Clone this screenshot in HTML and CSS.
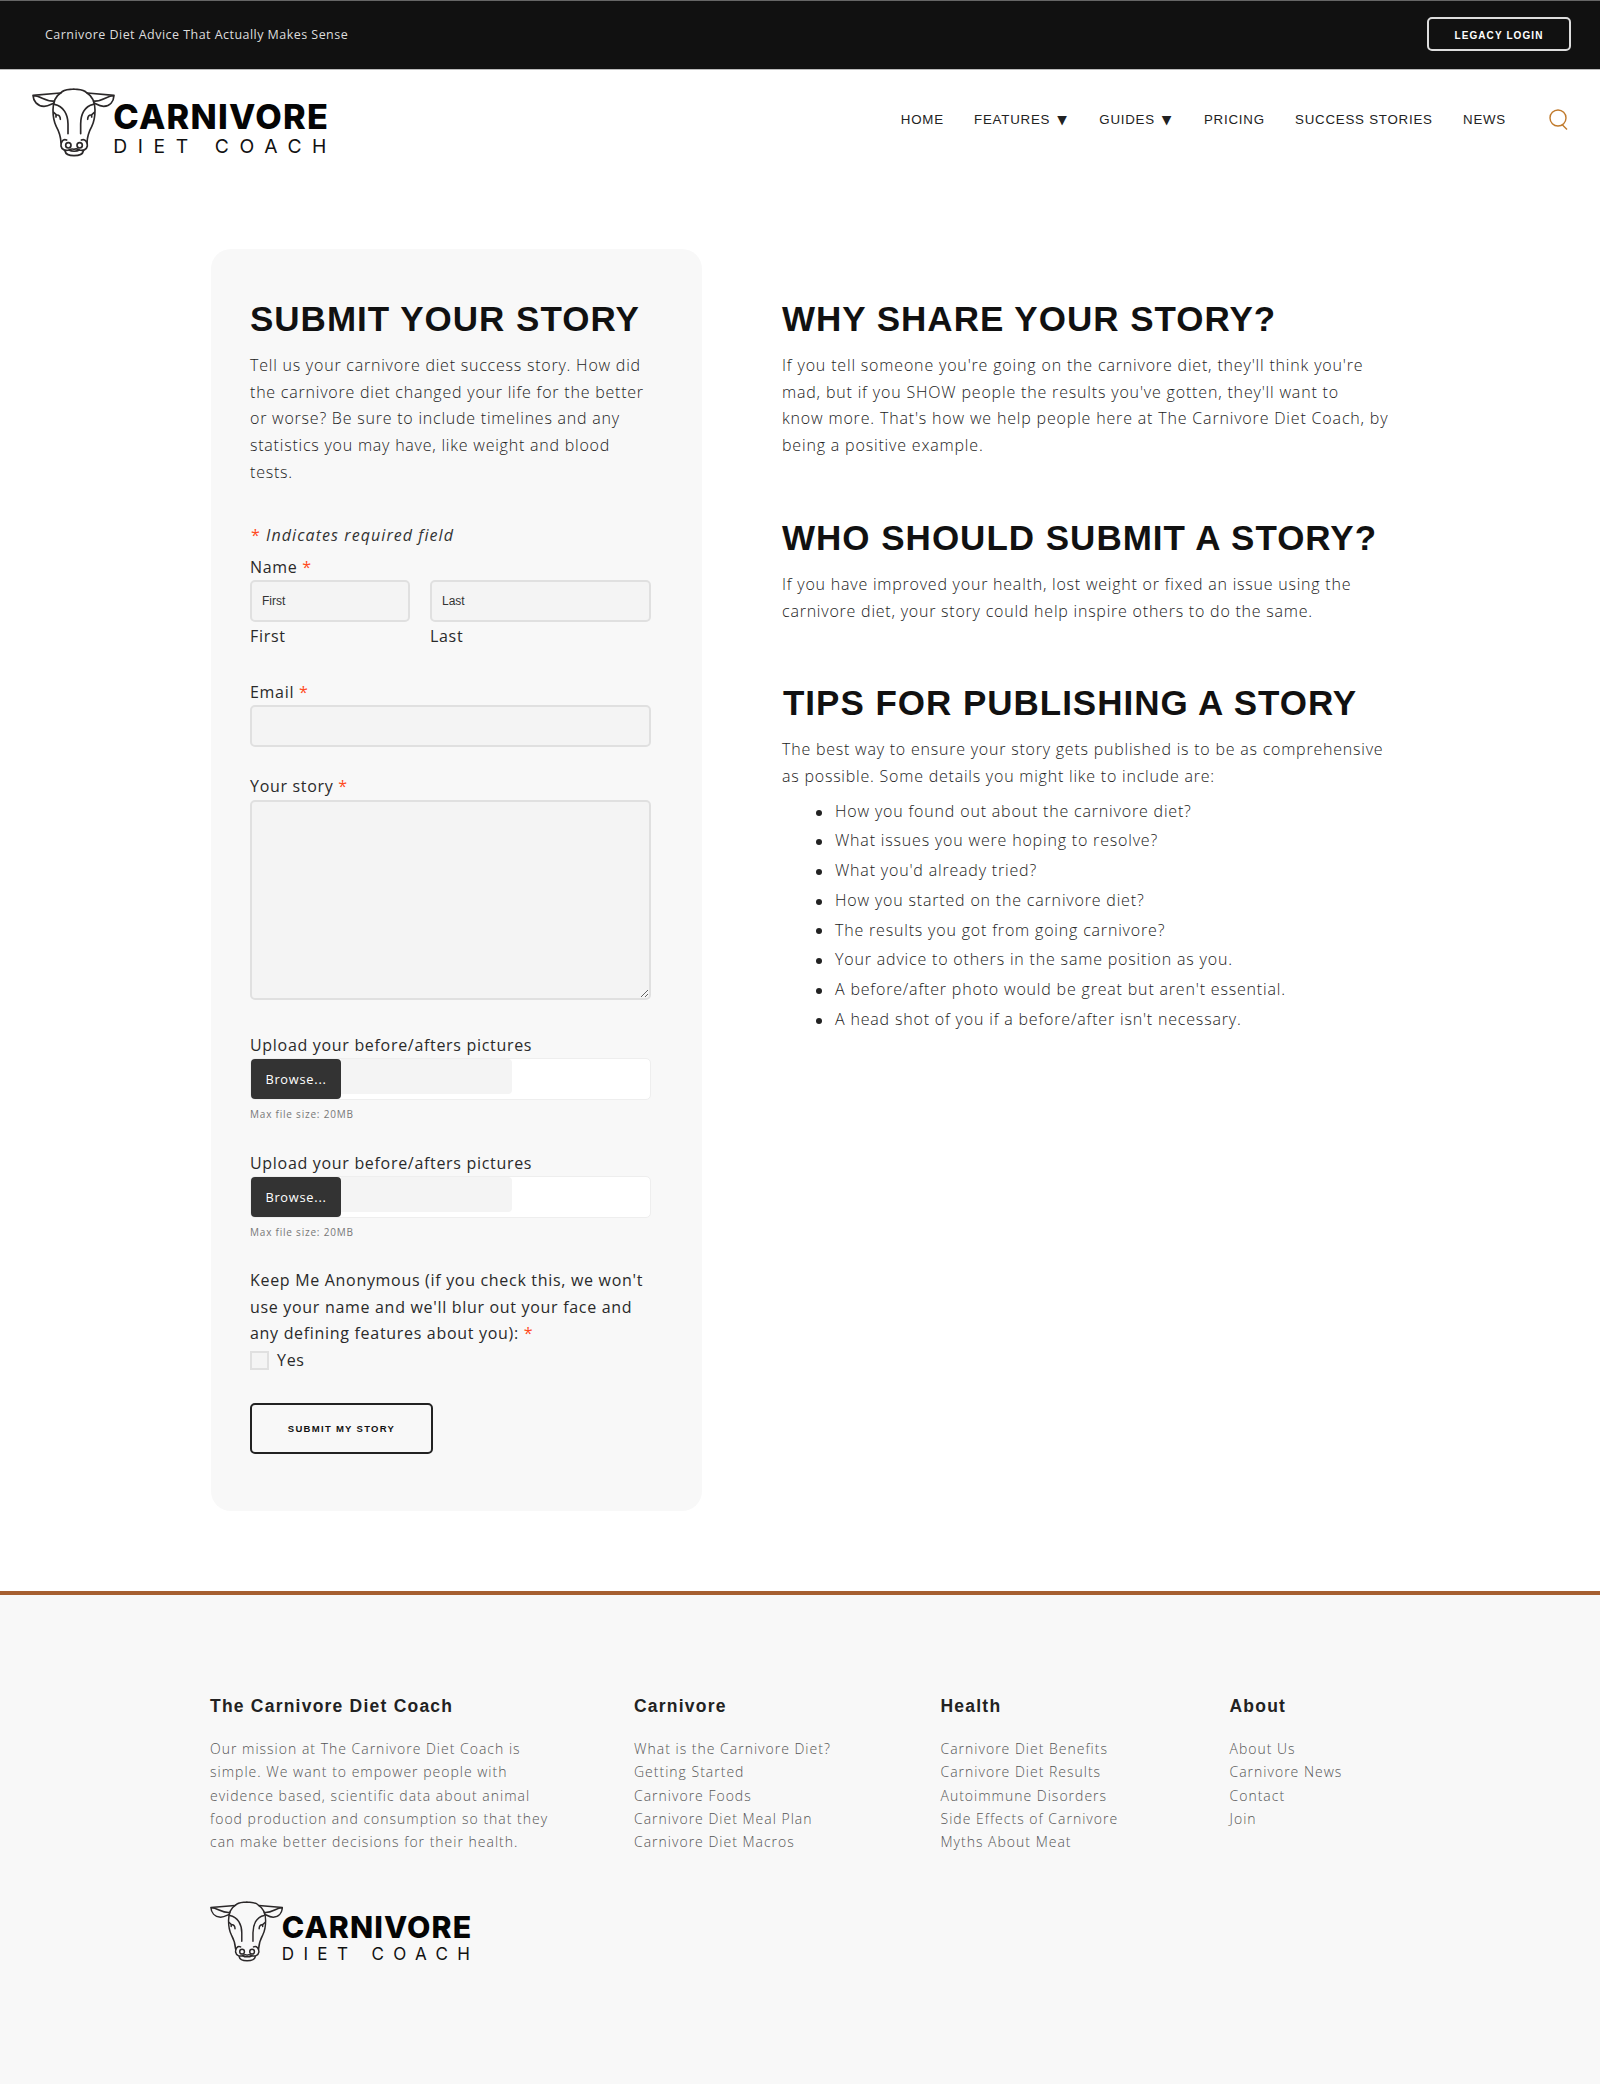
FILE: index.html
```html
<!DOCTYPE html>
<html lang="en">
<head>
<meta charset="utf-8">
<title>Submit Your Story - Carnivore Diet Coach</title>
<link rel="stylesheet" href="styles.css">
</head>
<body>
<div class="topbar">
  <span class="tagline">Carnivore Diet Advice That Actually Makes Sense</span>
  <a class="login">LEGACY LOGIN</a>
</div>

<header class="header">
  <div class="logo">
    <svg class="cow" viewBox="95 264 249 206" fill="none" stroke="#2b2829" stroke-width="5" stroke-linecap="round" stroke-linejoin="round">
      <path d="M182 278C190 267 204 269 220 267C236 269 250 267 259 278C276 288 284 305 284 330C284 350 283 362 274 380C264 398 261 410 260 428"/>
      <path d="M182 278C165 288 158 305 158 330C158 350 159 362 168 380C178 398 181 410 182 428"/>
      <path d="M180 279L98 286C99 303 110 318 131 319C143 319 150 314 161 309M98 287C120 286 135 306 162 303"/>
      <path d="M261 279L341 286C340 303 330 318 310 319C298 319 291 314 281 309M341 287C320 286 306 306 280 303"/>
      <path d="M162 313C190 318 203 345 203 372V401M279 313C252 318 241 345 241 372V401"/>
      <path d="M160 337L169 345C176 344 180 350 180 358M167 345V351M282 337L273 345C266 344 262 350 262 358M274 345V351"/>
      <circle cx="204" cy="436" r="8"/><circle cx="238" cy="436" r="8"/>
      <path d="M199 420C188 415 181 426 182 438C184 450 196 453 206 450C212 446 216 446 221 448C226 446 231 446 237 450C247 453 259 450 261 438C262 426 254 415 243 420"/>
      <path d="M194 453C196 464 208 467 221 467C234 467 247 464 249 453M206 450C214 455 229 455 237 450"/>
    </svg>
    <div class="wordmark"><div class="logo-name">CARNIVORE</div><div class="logo-sub">DIET COACH</div></div>
  </div>
  <nav class="nav">
    <a>HOME</a>
    <a>FEATURES <i class="caret">▼</i></a>
    <a>GUIDES <i class="caret">▼</i></a>
    <a>PRICING</a>
    <a>SUCCESS STORIES</a>
    <a>NEWS</a>
  </nav>
  <svg class="search" viewBox="0 0 20 22" fill="none" stroke="#c07a2c" stroke-width="1.4"><circle cx="9" cy="9" r="8"/><path d="M13 15.5L18 20.5"/></svg>
</header>

<main class="main">
  <form class="card">
    <h2>SUBMIT YOUR STORY</h2>
    <p>Tell us your carnivore diet success story. How did<br>the carnivore diet changed your life for the better<br>or worse? Be sure to include timelines and any<br>statistics you may have, like weight and blood<br>tests.</p>
    <div class="note"><b class="req">*</b> Indicates required field</div>
    <div class="field names">
      <label class="label">Name <b class="req">*</b></label>
      <div class="name-row">
        <div class="first"><input class="box" type="text" placeholder="First"><span class="label">First</span></div>
        <div class="last"><input class="box" type="text" placeholder="Last"><span class="label">Last</span></div>
      </div>
    </div>
    <div class="field email">
      <label class="label">Email <b class="req">*</b></label>
      <input class="box" type="text">
    </div>
    <div class="field story">
      <label class="label">Your story <b class="req">*</b></label>
      <textarea class="box"></textarea>
    </div>
    <div class="field upload">
      <label class="label">Upload your before/afters pictures</label>
      <div class="file"><span class="browse">Browse...</span><span class="picked"></span></div>
      <small>Max file size: 20MB</small>
    </div>
    <div class="field upload">
      <label class="label">Upload your before/afters pictures</label>
      <div class="file"><span class="browse">Browse...</span><span class="picked"></span></div>
      <small>Max file size: 20MB</small>
    </div>
    <div class="field anon">
      <label class="label">Keep Me Anonymous (if you check this, we won't<br>use your name and we'll blur out your face and<br>any defining features about you): <b class="req">*</b></label>
      <label class="label check"><span class="tick"></span>Yes</label>
    </div>
    <button class="submit" type="button">SUBMIT MY STORY</button>
  </form>

  <div class="info">
    <section>
      <h2>WHY SHARE YOUR STORY?</h2>
      <p>If you tell someone you're going on the carnivore diet, they'll think you're<br>mad, but if you SHOW people the results you've gotten, they'll want to<br>know more. That's how we help people here at The Carnivore Diet Coach, by<br>being a positive example.</p>
    </section>
    <section>
      <h2>WHO SHOULD SUBMIT A STORY?</h2>
      <p class="tight">If you have improved your health, lost weight or fixed an issue using the<br>carnivore diet, your story could help inspire others to do the same.</p>
    </section>
    <section>
      <h2 class="tips">TIPS FOR PUBLISHING A STORY</h2>
      <p class="tight">The best way to ensure your story gets published is to be as comprehensive<br>as possible. Some details you might like to include are:</p>
      <ul>
        <li>How you found out about the carnivore diet?</li>
        <li>What issues you were hoping to resolve?</li>
        <li>What you'd already tried?</li>
        <li>How you started on the carnivore diet?</li>
        <li>The results you got from going carnivore?</li>
        <li>Your advice to others in the same position as you.</li>
        <li>A before/after photo would be great but aren't essential.</li>
        <li>A head shot of you if a before/after isn't necessary.</li>
      </ul>
    </section>
  </div>
</main>

<footer class="footer">
  <div class="cols">
    <div>
      <h4>The Carnivore Diet Coach</h4>
      <p>Our mission at The Carnivore Diet Coach is<br>simple. We want to empower people with<br>evidence based, scientific data about animal<br>food production and consumption so that they<br>can make better decisions for their health.</p>
      <div class="logo small">
        <svg class="cow" viewBox="95 264 249 206" fill="none" stroke="#2b2829" stroke-width="5" stroke-linecap="round" stroke-linejoin="round">
          <path d="M182 278C190 267 204 269 220 267C236 269 250 267 259 278C276 288 284 305 284 330C284 350 283 362 274 380C264 398 261 410 260 428"/>
          <path d="M182 278C165 288 158 305 158 330C158 350 159 362 168 380C178 398 181 410 182 428"/>
          <path d="M180 279L98 286C99 303 110 318 131 319C143 319 150 314 161 309M98 287C120 286 135 306 162 303"/>
          <path d="M261 279L341 286C340 303 330 318 310 319C298 319 291 314 281 309M341 287C320 286 306 306 280 303"/>
          <path d="M162 313C190 318 203 345 203 372V401M279 313C252 318 241 345 241 372V401"/>
          <path d="M160 337L169 345C176 344 180 350 180 358M167 345V351M282 337L273 345C266 344 262 350 262 358M274 345V351"/>
          <circle cx="204" cy="436" r="8"/><circle cx="238" cy="436" r="8"/>
          <path d="M199 420C188 415 181 426 182 438C184 450 196 453 206 450C212 446 216 446 221 448C226 446 231 446 237 450C247 453 259 450 261 438C262 426 254 415 243 420"/>
          <path d="M194 453C196 464 208 467 221 467C234 467 247 464 249 453M206 450C214 455 229 455 237 450"/>
        </svg>
        <div class="wordmark"><div class="logo-name">CARNIVORE</div><div class="logo-sub">DIET COACH</div></div>
      </div>
    </div>
    <div>
      <h4>Carnivore</h4>
      <p>What is the Carnivore Diet?<br>Getting Started<br>Carnivore Foods<br>Carnivore Diet Meal Plan<br>Carnivore Diet Macros</p>
    </div>
    <div>
      <h4>Health</h4>
      <p>Carnivore Diet Benefits<br>Carnivore Diet Results<br>Autoimmune Disorders<br>Side Effects of Carnivore<br>Myths About Meat</p>
    </div>
    <div>
      <h4>About</h4>
      <p>About Us<br>Carnivore News<br>Contact<br>Join</p>
    </div>
  </div>
</footer>
</body>
</html>
```
FILE: styles.css
```css
* { box-sizing: border-box; }
body {
  margin: 0;
  width: 1600px;
  height: 2084px;
  display: flex;
  flex-direction: column;
  background: #fff;
  color: #222;
  font: 300 16px/26.67px "Open Sans", "Noto Sans", sans-serif;
  white-space: nowrap;
  overflow: hidden;
}
h2, h4, p, ul { margin: 0; }

.topbar {
  flex: none;
  height: 70px;
  display: flex;
  align-items: center;
  justify-content: space-between;
  padding: 0 29px 2px 45px;
  background: #111;
  border-top: 1px solid #666;
  border-bottom: 1px solid #bbb;
}
.tagline { font-size: 12.5px; font-weight: 400; letter-spacing: .46px; color: #ddd; padding-top: 2px; }
.login {
  width: 144px;
  height: 34px;
  border: 2px solid #ddd;
  border-radius: 5px;
  color: #fff;
  font: 700 10px/33px "Liberation Sans", sans-serif;
  letter-spacing: 1.1px;
  text-align: center;
}

.header { flex: none; height: 179px; display: flex; align-items: flex-start; padding: 18px 31px 0 32px; }
/* every logo dimension is in em, so one font-size scales the whole mark */
.logo { display: flex; align-items: flex-start; width: 29.5em; height: 6.87em; font-size: 10px; line-height: 1; }
.cow { flex: none; width: 8.3em; height: 6.87em; display: block; }
.wordmark { padding-top: 1.22em; margin-left: -.17em; }
.logo-name { font: 800 3.43em/1 Inter, sans-serif; letter-spacing: .036em; color: #050505; }
.logo-sub { font: 400 1.93em/1 Inter, sans-serif; letter-spacing: .549em; color: #111; margin-top: .135em; }
.nav {
  display: flex;
  gap: 30.3px;
  margin: 21px 0 0 auto;
  font: 400 13.3px/22px "Liberation Sans", sans-serif;
  letter-spacing: .77px;
  color: #222;
}
.caret { font: 400 12.5px/1 "DejaVu Sans", sans-serif; letter-spacing: 0; margin: 0 2.2px 0 2.5px; }
.search { width: 20px; height: 22px; margin: 21px 0 0 43px; }

.main { flex: none; height: 1342px; display: flex; align-items: flex-start; padding-left: 210.5px; gap: 80px; }
h2 { font: 700 35px/40px "Liberation Sans", sans-serif; letter-spacing: 1px; color: #111; padding-bottom: 13px; }
.card { width: 491.5px; height: 1261.5px; padding: 50px 40px 0 39.5px; background: #f8f8f8; border-radius: 20px; }
.card p { letter-spacing: .78px; }
.req { color: #ff4a1c; font-weight: 400; font-style: normal; }
.note { margin-top: 36.6px; padding-left: 1px; font-style: italic; font-weight: 400; letter-spacing: 1.07px; height: 31.2px; color: #333; }
.label { display: block; font-weight: 400; letter-spacing: .69px; padding-top: .6px; margin-bottom: -.6px; }
.field { display: flex; flex-direction: column; gap: .2px; color: #2a2a2a; }
.names { height: 125px; }
.name-row { display: flex; gap: 20px; }
.first { width: 160px; }
.last { width: 220.5px; }
.box {
  display: block;
  width: 100%;
  height: 42px;
  padding: 0 10px;
  border: 2px solid #e0e0e0;
  border-radius: 5px;
  background: #f4f4f4;
  font: 400 12px "Liberation Sans", sans-serif;
}
.box::placeholder { color: #333; opacity: 1; }
.email, .story, .upload, .anon { width: 401px; }
.email { height: 94.5px; }
.story { height: 259px; }
.story .box { height: 200px; resize: both; }
.upload { height: 117.7px; gap: 0; }
.file { display: flex; height: 42px; margin-top: -.2px; border: 1px solid #eee; border-radius: 5px; background: #fff; }
.browse {
  width: 90px;
  height: 40px;
  border-radius: 4px;
  background: #333;
  color: #fff;
  font-size: 12.8px;
  font-weight: 500;
  line-height: 40px;
  text-align: center;
  letter-spacing: .75px;
}
.picked { width: 171px; height: 35px; background: #f4f4f4; border-radius: 0 4px 4px 0; }
small { font-size: 10px; font-weight: 400; letter-spacing: .79px; line-height: 29.5px; color: #777; }
.anon { gap: 0; height: 135.8px; }
.anon .label { padding: 0; margin: 0; }
.check { display: flex; align-items: center; gap: 8px; }
.tick { width: 19px; height: 19px; border: 2px solid #e0e0e0; background: #f4f4f4; margin-top: 1px; }
.submit {
  display: block;
  width: 183px;
  height: 51px;
  padding: 0;
  border: 2px solid #222;
  border-radius: 5px;
  background: transparent;
  color: #111;
  font: 700 9.5px "Liberation Sans", sans-serif;
  letter-spacing: 1.29px;
}

.info { padding-top: 50px; display: flex; flex-direction: column; gap: 59.2px; }
.info p { letter-spacing: .83px; }
.info .tight { letter-spacing: .78px; }
.info .tips { padding-left: 1px; letter-spacing: .98px; }
ul { padding: 7px 0 0 53px; list-style: none; letter-spacing: .82px; line-height: 29.7px; }
li { display: flex; align-items: center; }
li::before { content: ""; width: 6px; height: 6px; margin: 2px 13px 0 -19px; border-radius: 50%; background: #222; }

.footer { flex: 1; border-top: 4px solid #a65f30; background: #f8f8f8; padding: 101px 0 0 210px; }
.cols { display: grid; grid-template-columns: 424px 306.5px 289px auto; }
h4 { font: 700 17.5px/20px "Liberation Sans", sans-serif; letter-spacing: 1.22px; color: #222; padding-bottom: 21px; }
.footer p { font-size: 14px; line-height: 23.35px; letter-spacing: 1px; color: #555; }
.logo.small { font-size: 8.83px; margin-top: 47.5px; }
```
